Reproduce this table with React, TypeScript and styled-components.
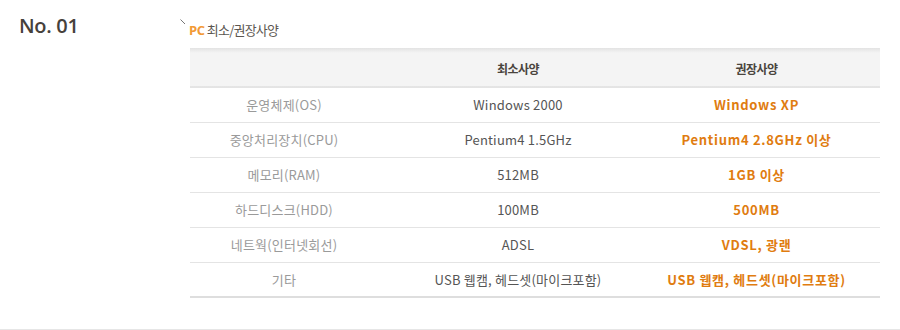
import React from "react";
import styled, { createGlobalStyle } from "styled-components";

const Global = createGlobalStyle`
  html, body { margin: 0; padding: 0; background: #fff; }
  body { font-family: "Noto Sans CJK KR", "Noto Sans", sans-serif; }
`;

const Page = styled.div`
  display: flex;
  width: 900px;
  height: 330px;
  box-sizing: border-box;
  border-bottom: 1px solid #e6e6e6;
`;

const Side = styled.div`
  width: 180px;
  padding: 12px 0 0 19px;
  box-sizing: border-box;
`;

const Number = styled.div`
  font-family: "Open Sans", "Noto Sans", sans-serif;
  font-size: 20px;
  font-weight: 600;
  color: #46413b;
  letter-spacing: -0.3px;
  line-height: 28px;
`;

const Main = styled.div`
  width: 700px;
  display: flex;
  flex-direction: column;
`;

const Title = styled.div`
  display: flex;
  align-items: flex-start;
  height: 48px;
  box-sizing: border-box;
  padding-top: 19px;
`;

const Tick = styled.svg`
  width: 6px;
  height: 6px;
  margin-right: 3px;
  flex: none;
`;

const TitleText = styled.div`
  margin-top: 2px;
  font-size: 13px;
  line-height: 18px;
  color: #5b5650;
  letter-spacing: -0.8px;
`;

const Accent = styled.span`
  color: #f29a36;
  font-family: "Open Sans", "Noto Sans", sans-serif;
  font-weight: 700;
  margin-right: 2px;
  letter-spacing: -0.3px;
`;

const Table = styled.table`
  margin-left: 10px;
  width: 690px;
  border-collapse: collapse;
  table-layout: fixed;
  border-bottom: 2px solid #dedede;
`;

const HeadRow = styled.tr`
  height: 39px;
  background: linear-gradient(#e3e3e3 0px, #f4f4f4 5px, #f4f4f4 100%);
  border-bottom: 1px solid #e4e4e4;
`;

const Th = styled.th<{ $pr?: number }>`
  font-size: 12px;
  font-weight: 700;
  color: #4a443d;
  text-align: center;
  padding: 2px ${(p) => p.$pr ?? 0}px 0 0;
  letter-spacing: -0.5px;
`;

const Row = styled.tr<{ $last?: boolean }>`
  height: 35px;
  border-bottom: ${(p) => (p.$last ? "none" : "1px solid #e4e4e4")};
`;

const Td = styled.td<{ $tone: "label" | "min" | "rec"; $pr?: number }>`
  font-size: 13px;
  text-align: center;
  padding: 0 ${(p) => p.$pr ?? 0}px 0 0;
  letter-spacing: ${(p) => (p.$tone === "rec" ? "0.7px" : "0.2px")};
  color: ${(p) =>
    p.$tone === "label" ? "#9a9a9a" : p.$tone === "min" ? "#555" : "#e07c10"};
  font-weight: ${(p) => (p.$tone === "rec" ? 700 : 400)};
`;

const rows = [
  ["운영체제(OS)", "Windows 2000", "Windows XP"],
  ["중앙처리장치(CPU)", "Pentium4 1.5GHz", "Pentium4 2.8GHz 이상"],
  ["메모리(RAM)", "512MB", "1GB 이상"],
  ["하드디스크(HDD)", "100MB", "500MB"],
  ["네트웍(인터넷회선)", "ADSL", "VDSL, 광랜"],
  ["기타", "USB 웹캠, 헤드셋(마이크포함)", "USB 웹캠, 헤드셋(마이크포함)"],
];

export default function App() {
  return (
    <>
      <Global />
      <Page>
        <Side>
          <Number>No. 01</Number>
        </Side>
        <Main>
          <Title>
            <Tick viewBox="0 0 6 6">
              <line x1="0.5" y1="0.5" x2="5" y2="5" stroke="#777" strokeWidth="1" />
            </Tick>
            <TitleText>
              <Accent>PC</Accent>최소/권장사양
            </TitleText>
          </Title>
          <Table>
            <colgroup>
              <col style={{ width: 188 }} />
              <col style={{ width: 280 }} />
              <col />
            </colgroup>
            <thead>
              <HeadRow>
                <Th></Th>
                <Th>최소사양</Th>
                <Th $pr={25}>권장사양</Th>
              </HeadRow>
            </thead>
            <tbody>
              {rows.map((r, i) => (
                <Row key={i} $last={i === rows.length - 1}>
                  <Td $tone="label">{r[0]}</Td>
                  <Td $tone="min">{r[1]}</Td>
                  <Td $tone="rec" $pr={25}>
                    {r[2]}
                  </Td>
                </Row>
              ))}
            </tbody>
          </Table>
        </Main>
      </Page>
    </>
  );
}
